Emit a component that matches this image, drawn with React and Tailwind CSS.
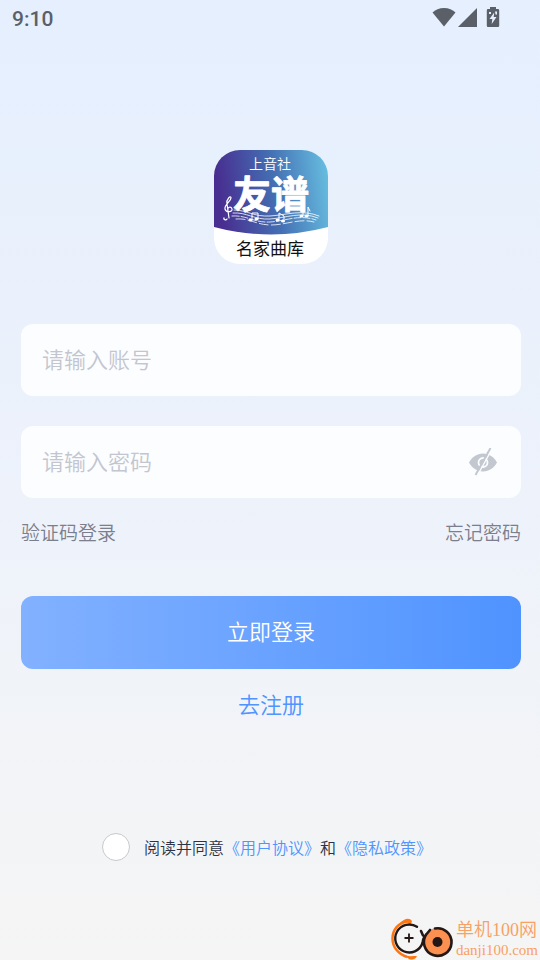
import React, { useState } from 'react';

const StatusBar = () => (
  <header className="flex h-9 items-center justify-between pl-3 pr-10 text-[#5b6068]">
    <span className="pt-0.5 font-[Roboto,sans-serif] text-[21px] font-medium leading-6">9:10</span>
    <div className="flex items-center gap-0.5 pb-0.5">
      <svg className="h-5 w-6" viewBox="0 0 24 20" fill="currentColor" aria-hidden="true">
        <path d="M.5 5.500C3 2.800 7.500 1 12 1s9 1.800 11.500 4.500L12 19.500Z" />
      </svg>
      <svg className="h-5 w-5" viewBox="0 0 20 20" fill="currentColor" aria-hidden="true">
        <path d="M0 20 19 1v19Z" />
      </svg>
      <svg className="ml-1.5 h-5 w-3.5" viewBox="0 0 14 20" fill="currentColor" aria-hidden="true">
        <path d="M4 0h6v2h2a1.200 1.200 0 0 1 1.200 1.200v15.600A1.200 1.200 0 0 1 12 20H2a1.200 1.200 0 0 1-1.200-1.200V3.200A1.200 1.200 0 0 1 2 2h2Z" />
        <path d="m8.200 5.500-4.700 6.500h2.800l-.6 5 4.800-7H7.700ZM3 5h2v2H3Zm6-.5h2v3H9.500Z" fill="#e6effe" />
      </svg>
    </div>
  </header>
);

const AppLogo = () => (
  <svg className="size-[114px]" viewBox="0 0 114 114" role="img" aria-label="友谱">
    <defs>
      <linearGradient id="logoFill" x1="0" y1="0.100" x2="1" y2="0">
        <stop offset="0" stopColor="#482e90" />
        <stop offset="0.5" stopColor="#4470b4" />
        <stop offset="1" stopColor="#68c1e2" />
      </linearGradient>
      <clipPath id="logoShape">
        <rect width="114" height="114" rx="26" />
      </clipPath>
    </defs>
    <g clipPath="url(#logoShape)">
      <rect width="114" height="114" fill="#fff" />
      <path d="M0 0h114v77Q57 92 0 77Z" fill="url(#logoFill)" />
    </g>
    <g textAnchor="middle" fontFamily="'Noto Sans CJK SC', sans-serif">
      <text x="56" y="19" fontSize="14" fontWeight="350" fill="#fff">上音社</text>
      <text x="57" y="58" fontSize="38" fontWeight="700" fill="#fff" stroke="#fff" strokeWidth="0.800" strokeLinejoin="round">友谱</text>
      <text x="56" y="105" fontSize="17" fontWeight="400" fill="#111">名家曲库</text>
    </g>
    {/* Staff lines, treble clef and notes */}
    <g fill="none" stroke="#fff" strokeWidth="0.8" strokeLinecap="round">
      <path d="M20 60c13 0 20 7 36 6s32-7 49 0" />
      <path d="M19 63c14-1 21 7 37 6s31-8 48-1" />
      <path d="M18 66c15-1 22 7 38 6s29-8 46-2" strokeDasharray="7 2" />
      <path d="M22 69c14-1 20 6 35 6s28-7 43-3" strokeDasharray="9 3" />
      <path d="M13 69c-1 2-4 0-3-1m5 0-2-14c-1-5 4-9 4-6s-7 7-6 11 8 3 7 0-5-2-4 1" strokeWidth="1.200" />
      <path d="M38 70v-7h6v6M65 70v-7l5 3v5M89 65v-5m5 6v-9l2 4" strokeWidth="1" />
    </g>
    <g fill="#fff">
      <ellipse cx="36.500" cy="70" rx="2" ry="1.500" />
      <ellipse cx="42.500" cy="69" rx="2" ry="1.500" />
      <ellipse cx="63.500" cy="70" rx="2" ry="1.500" />
      <ellipse cx="69" cy="71" rx="2" ry="1.500" />
      <ellipse cx="87.500" cy="66" rx="2" ry="1.500" />
      <ellipse cx="92.500" cy="66" rx="2" ry="1.500" />
    </g>
  </svg>
);

const EyeOffIcon = () => (
  <svg className="size-7" viewBox="0 0 28 28" aria-hidden="true">
    <path d="M0 14.500C3 9 8 5.500 14 5.500s11 3.500 14 9c-3 5.500-8 9-14 9S3 20 0 14.500Z" fill="#c3c7d0" />
    <circle cx="14" cy="14.500" r="4.500" fill="none" stroke="#fcfdff" strokeWidth="1.800" />
    <path d="M23 1 8 28" stroke="#fcfdff" strokeWidth="1.500" />
    <path d="M21.500 0 6.500 27" stroke="#c3c7d0" strokeWidth="2" />
  </svg>
);

const Watermark = () => (
  <div className="absolute bottom-0 right-0.5 flex items-end gap-0.5 text-[#f9a064]">
    <svg className="h-[42px] w-16" viewBox="0 0 64 42" fill="none" aria-hidden="true">
      <path d="M17 3.500C8 5 2.500 12 2.500 20.500S8 36 17 39" stroke="#fb7615" strokeWidth="2.500" />
      <path d="M10 5c4-4 9-6 12-2l-1 3c-4-2-7-1-11-1ZM12 36c5 3 9 2 15 2-2 4-5 4-8 3Z" fill="#fb7615" />
      <path d="M27 8.800A14 14 0 1 0 32.500 25" stroke="#231815" strokeWidth="2.400" strokeLinecap="round" />
      <path d="M19 15.500v9M14.500 20h9" stroke="#231815" strokeWidth="1.800" />
      <circle cx="47.500" cy="24" r="14" fill="#fb9050" />
      <path d="m31 13 2 4.500M40 12l-5 6M45 10.500A13.800 13.800 0 1 1 36.500 16Q32 21 33 26" stroke="#231815" strokeWidth="2.600" strokeLinecap="round" />
      <circle cx="47.500" cy="24" r="5" fill="#231815" />
    </svg>
    <div className="flex flex-col font-['Liberation_Serif','Noto_Sans_CJK_SC',serif]">
      <span className="text-[18px] leading-5">单机100网</span>
      <span className="text-[15px] leading-5">danji100.com</span>
    </div>
  </div>
);

const App = () => {
  const [account, setAccount] = useState('');
  const [password, setPassword] = useState('');
  const [showPassword, setShowPassword] = useState(false);
  const [agreed, setAgreed] = useState(false);

  return (
    <div className="relative min-h-screen bg-linear-to-b from-[#e5effe] via-[#edf2fb] to-[#f5f5f5] font-['Noto_Sans_CJK_SC',sans-serif] font-[350]">
      <StatusBar />

      <main className="flex flex-col pl-[21px] pr-[19px] pt-[114px]">
        <div className="flex justify-center">
          <AppLogo />
        </div>

        <form className="mt-[60px] flex flex-col" onSubmit={(e) => e.preventDefault()}>
          <input
            type="text"
            aria-label="账号"
            placeholder="请输入账号"
            value={account}
            onChange={(e) => setAccount(e.target.value)}
            className="h-[72px] w-full rounded-xl bg-[#fcfdff] px-[21px] pb-1 text-[22px] text-gray-800 outline-none placeholder:text-[#c3c6cf]"
          />

          {/* Password with visibility toggle */}
          <div className="mt-[30px] flex h-[72px] items-center rounded-xl bg-[#fcfdff] pl-[21px] pr-6">
            <input
              type={showPassword ? 'text' : 'password'}
              aria-label="密码"
              placeholder="请输入密码"
              value={password}
              onChange={(e) => setPassword(e.target.value)}
              className="min-w-0 flex-1 pb-1 text-[22px] text-gray-800 outline-none placeholder:text-[#c3c6cf]"
            />
            <button type="button" aria-label="显示密码" onClick={() => setShowPassword(!showPassword)}>
              <EyeOffIcon />
            </button>
          </div>

          <div className="mt-5 flex justify-between text-[19px] leading-7 text-[#7b7e8c]">
            <button type="button">验证码登录</button>
            <button type="button">忘记密码</button>
          </div>

          <button
            type="submit"
            className="mt-[50px] h-[73px] rounded-xl bg-linear-to-r from-[#82b1ff] to-[#4f93ff] pb-1 text-[22px] text-white"
          >
            立即登录
          </button>
          <a href="#register" className="mt-[18px] self-center text-[22px] leading-8 text-[#4f94ff]">
            去注册
          </a>

          {/* Terms */}
          <div className="mt-28 flex items-center justify-center gap-3.5 pr-2 pt-0.5 text-[16px] leading-7 text-[#2c3346]">
            <input
              id="agree"
              type="checkbox"
              checked={agreed}
              onChange={(e) => setAgreed(e.target.checked)}
              className="size-7 appearance-none rounded-full border border-[#c8c9cc] bg-white checked:bg-[#4f94ff]"
            />
            <p>
              <label htmlFor="agree">阅读并同意</label>
              <a href="#terms" className="text-[#4f94ff]">《用户协议》</a>
              和
              <a href="#privacy" className="text-[#4f94ff]">《隐私政策》</a>
            </p>
          </div>
        </form>
      </main>

      <Watermark />
    </div>
  );
};

export default App;
